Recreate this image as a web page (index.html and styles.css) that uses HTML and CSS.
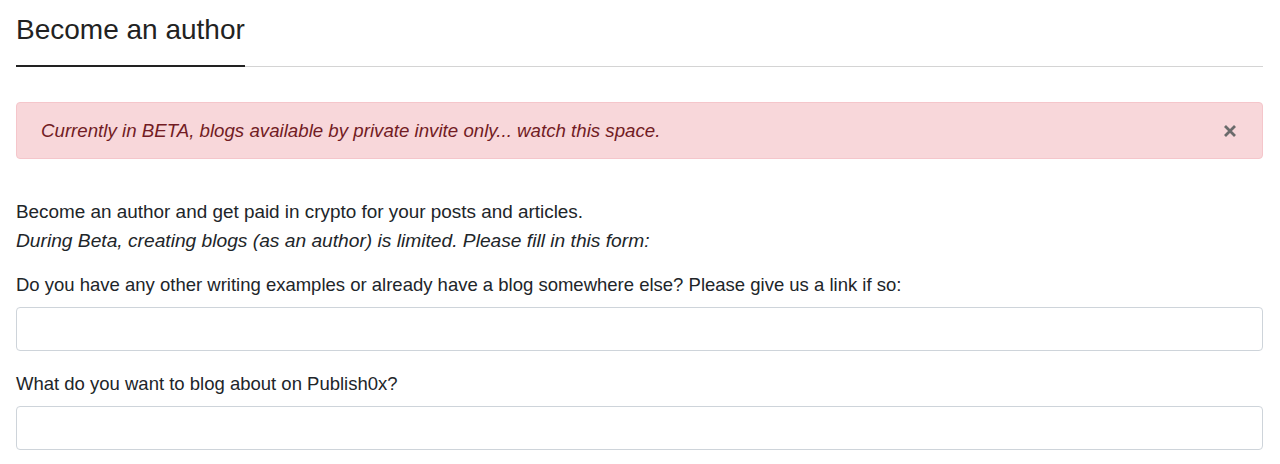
FILE: index.html
```html
<!DOCTYPE html>
<html>
<head>
<meta charset="utf-8">
<link rel="stylesheet" href="styles.css">
</head>
<body>
<div class="page">
  <div class="title-bar">
    <h1 class="title">Become an author</h1>
  </div>
  <div class="alert">
    <span class="alert-text">Currently in BETA, blogs available by private invite only... watch this space.</span>
    <svg class="close" width="14" height="14" viewBox="0 0 14 14"><path d="M2 2 L12 12 M12 2 L2 12" stroke="#6b6b6b" stroke-width="2.8" stroke-linecap="butt"/></svg>
  </div>
  <p class="intro">Become an author and get paid in crypto for your posts and articles.<br><em class="note">During Beta, creating blogs (as an author) is limited. Please fill in this form:</em></p>
  <div class="field">
    <label class="label">Do you have any other writing examples or already have a blog somewhere else? Please give us a link if so:</label>
    <input class="input" type="text">
  </div>
  <div class="field">
    <label class="label">What do you want to blog about on Publish0x?</label>
    <input class="input" type="text">
  </div>
</div>
</body>
</html>
```
FILE: styles.css
```css
html, body { margin: 0; padding: 0; background: #fff; }
body { font-family: "Liberation Sans", Arial, sans-serif; color: #212529; }
.page { padding: 0 17px 0 16px; }
.title-bar { border-bottom: 1px solid #d4d4d4; display: flex; }
.title { margin: 0; font-size: 28px; font-weight: 400; padding: 14px 0 19px; border-bottom: 2px solid #222; margin-bottom: -1px; line-height: 32px; color: #222; }
.alert { margin-top: 35px; background: #f8d7da; border: 1px solid #f5c6cb; border-radius: 4px; color: #721c24; display: flex; align-items: center; justify-content: space-between; height: 55px; padding: 0 24px 0 24px; }
.alert-text { font-style: italic; font-size: 18.7px; }
.close { display: block; margin-right: 1px; }
.intro { margin: 38px 0 0; font-size: 18.9px; line-height: 29px; }
.note { font-size: 19.2px; }
.field { margin-top: 18px; }
.label { display: block; font-size: 18.5px; line-height: 24px; margin-bottom: 10px; }
.input { display: block; box-sizing: border-box; width: 100%; height: 44px; border: 1px solid #ced4da; border-radius: 4px; margin: 0; padding: 6px 12px; font-size: 16px; }
.field + .field { margin-top: 21px; }
```
